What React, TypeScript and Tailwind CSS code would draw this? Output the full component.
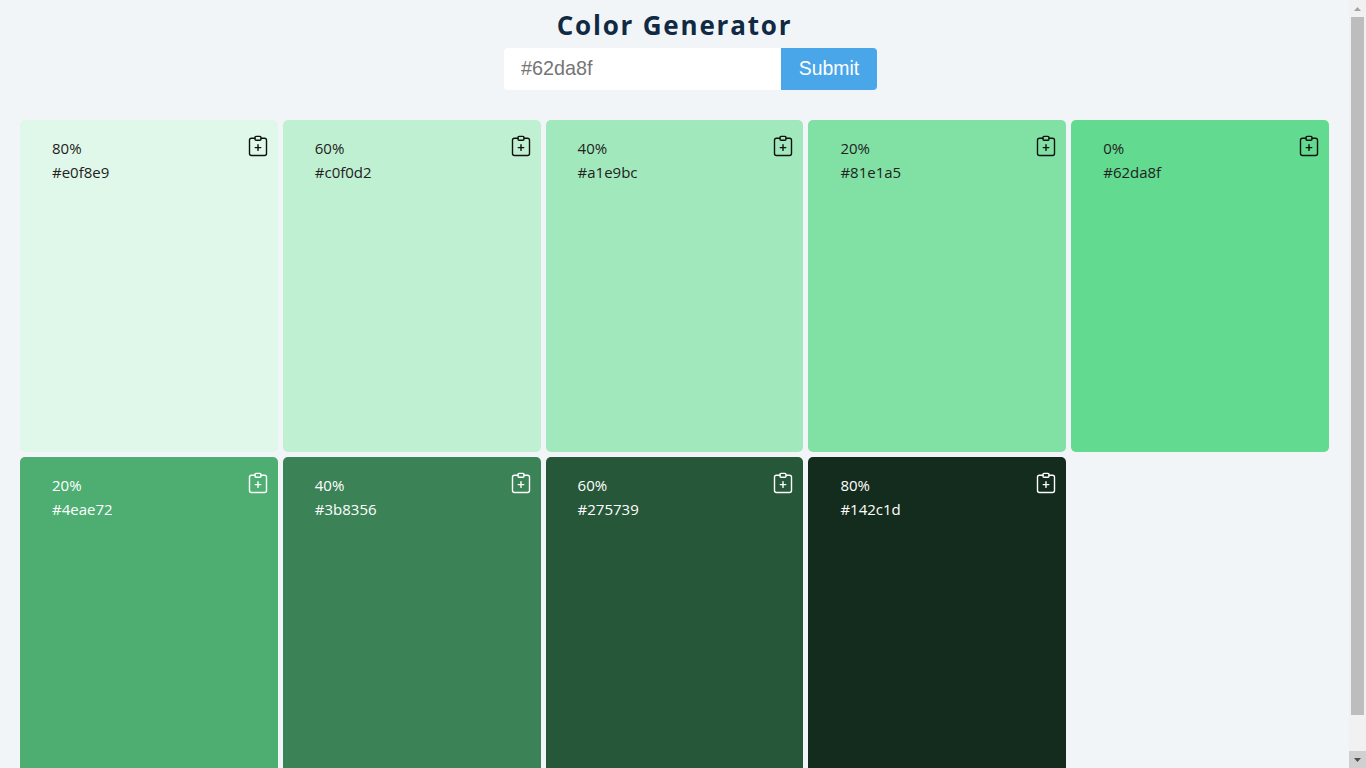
const shades = [
  { pct: "80%", hex: "#e0f8e9", bg: "bg-[#e0f8e9]", dark: false },
  { pct: "60%", hex: "#c0f0d2", bg: "bg-[#c0f0d2]", dark: false },
  { pct: "40%", hex: "#a1e9bc", bg: "bg-[#a1e9bc]", dark: false },
  { pct: "20%", hex: "#81e1a5", bg: "bg-[#81e1a5]", dark: false },
  { pct: "0%", hex: "#62da8f", bg: "bg-[#62da8f]", dark: false },
  { pct: "20%", hex: "#4eae72", bg: "bg-[#4eae72]", dark: true },
  { pct: "40%", hex: "#3b8356", bg: "bg-[#3b8356]", dark: true },
  { pct: "60%", hex: "#275739", bg: "bg-[#275739]", dark: true },
  { pct: "80%", hex: "#142c1d", bg: "bg-[#142c1d]", dark: true },
];

function ClipboardIcon() {
  return (
    <svg width="24" height="24" viewBox="0 0 24 24" fill="none" stroke="currentColor" strokeWidth="1.4" strokeLinecap="round" strokeLinejoin="round">
      <path d="M9 4.2H5.5a2 2 0 0 0-2 2v13.3a2 2 0 0 0 2 2h13a2 2 0 0 0 2-2V6.2a2 2 0 0 0-2-2H15" />
      <rect x="9" y="2.4" width="6" height="3.8" rx="1" />
      <path d="M12 10.8v5.6M9.2 13.6h5.6" />
    </svg>
  );
}

function Swatch({ pct, hex, bg, dark }: (typeof shades)[number]) {
  return (
    <article
      className={`${bg} ${dark ? "text-white" : "text-[#222222]"} relative h-[332px] rounded-[5px] px-8 py-4 text-[15px] leading-6`}
    >
      <p>{pct}</p>
      <p>{hex}</p>
      <button type="button" className={`absolute right-[8px] top-[14px] ${dark ? "text-white" : "text-[#111111]"}`}>
        <ClipboardIcon />
      </button>
    </article>
  );
}

function Scrollbar() {
  return (
    <aside className="flex h-[768px] w-[17px] shrink-0 flex-col bg-[#f1f1f1]">
      <div className="flex h-[17px] items-center justify-center">
        <svg width="7" height="4" viewBox="0 0 7 4" className="fill-[#a3a3a3]">
          <path d="M3.5 0 7 4H0z" />
        </svg>
      </div>
      <div className="mx-[2px] h-[698px] bg-[#bdbdbd]" />
      <div className="flex-1" />
      <div className="flex h-[17px] items-center justify-center bg-[#d0d0d0]">
        <svg width="7" height="4" viewBox="0 0 7 4" className="fill-[#505050]">
          <path d="M0 0h7L3.5 4z" />
        </svg>
      </div>
    </aside>
  );
}

export default function App() {
  return (
    <div className="flex h-[768px] overflow-hidden bg-[#f1f5f8]">
      <main className="h-[808px] min-w-0 flex-1 font-['Open_Sans','Noto_Sans',sans-serif]">
        <h1 className="pt-[8px] text-center text-[26px] leading-[35px] font-bold tracking-[1.8px] text-[#102a43]">
          Color Generator
        </h1>
        <form className="mt-[5px] ml-[504px] flex w-[373px] font-['Liberation_Sans',sans-serif]">
          <input
            readOnly
            placeholder="#62da8f"
            className="h-[42px] w-[277px] rounded-l-[4px] bg-white pr-4 pl-[17px] pb-[2px] text-[19.8px] outline-none placeholder:text-[#757575]"
          />
          <button type="button" className="h-[42px] w-[96px] rounded-r-[4px] bg-[#49a6e9] text-[19.4px] text-white">
            Submit
          </button>
        </form>
        <section className="mt-[30px] grid grid-cols-5 gap-[5px] px-5">
          {shades.map((shade) => (
            <Swatch key={shade.hex} {...shade} />
          ))}
        </section>
      </main>
      <Scrollbar />
    </div>
  );
}
